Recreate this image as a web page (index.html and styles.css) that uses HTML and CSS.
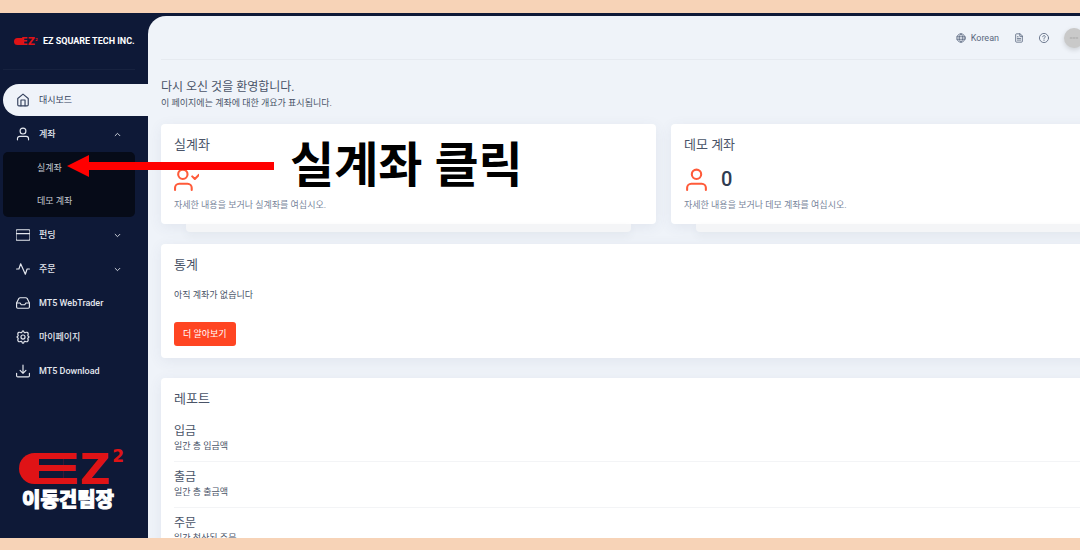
FILE: index.html
```
<!DOCTYPE html>
<html lang="ko">

<head>
    <meta charset="utf-8">
    <title>EZ Square Tech Inc.</title>
    <link rel="stylesheet" href="styles.css">
</head>

<body>
    <div class="app">
        <!-- Sidebar -->
        <aside class="sidebar">
            <div class="brand">
                <span class="mark mark-small"><b>EZ</b><sup>2</sup></span>
                <span class="brand-name">EZ SQUARE TECH INC.</span>
            </div>
            <nav class="menu">
                <a href="#" class="item active">
                    <svg class="icon" viewBox="0 0 24 24"><path d="M3 9.500 12 2l9 7.500V20a2 2 0 0 1-2 2H5a2 2 0 0 1-2-2z"/><path d="M8.500 22V12h7v10"/></svg>
                    대시보드
                </a>
                <button type="button" class="item">
                    <svg class="icon" viewBox="0 0 24 24"><circle cx="12" cy="7" r="5"/><path d="M2.500 22v-2a4 4 0 0 1 4-4h11a4 4 0 0 1 4 4v2"/></svg>
                    계좌
                    <svg class="chevron" viewBox="0 0 24 24"><path d="m4 16 8-8 8 8"/></svg>
                </button>
                <div class="submenu">
                    <a href="#">실계좌</a>
                    <a href="#">데모 계좌</a>
                </div>
                <button type="button" class="item">
                    <svg class="icon" viewBox="0 0 24 24"><rect x="0" y="3" width="24" height="18" rx="2"/><path d="M0 9.500h24"/></svg>
                    펀딩
                    <svg class="chevron" viewBox="0 0 24 24"><path d="m4 8 8 8 8-8"/></svg>
                </button>
                <button type="button" class="item">
                    <svg class="icon" viewBox="0 0 24 24"><path d="M23 12h-4l-3 9L8 3l-3 9H1"/></svg>
                    주문
                    <svg class="chevron" viewBox="0 0 24 24"><path d="m4 8 8 8 8-8"/></svg>
                </button>
                <a href="#" class="item">
                    <svg class="icon" viewBox="0 0 24 24"><path d="M23 12h-6l-2 3H9l-2-3H1"/><path d="M5 4 1 12v7a2 2 0 0 0 2 2h18a2 2 0 0 0 2-2v-7l-4-8q-1-1-2-1H7q-1 0-2 1z"/></svg>
                    MT5 WebTrader
                </a>
                <a href="#" class="item">
                    <svg class="icon" viewBox="0 0 24 24"><path d="M10.300 3.300c.4-2.400 3-2.400 3.400 0a1.700 1.700 0 0 0 2.600 1.100c1.700-1.300 4.700-.2 4.700 2.300 0 1-.8 1.900-.8 2.700 0 1.300 2 1.200 2 2.600s-2 1.300-2 2.600c0 .8.8 1.700.8 2.700 0 2.500-3 3.600-4.700 2.300a1.700 1.700 0 0 0-2.600 1.100c-.4 2.400-3 2.400-3.400 0a1.700 1.700 0 0 0-2.600-1.100C6 20.900 3 19.800 3 17.300c0-1 .8-1.900.8-2.700 0-1.300-2-1.200-2-2.600s2-1.300 2-2.600C3.800 8.600 3 7.700 3 6.700c0-2.500 3-3.600 4.700-2.300a1.700 1.700 0 0 0 2.600-1.100z"/><circle cx="12" cy="12" r="3.500"/></svg>
                    마이페이지
                </a>
                <a href="#" class="item">
                    <svg class="icon" viewBox="0 0 24 24"><path d="M1 16v4a2 2 0 0 0 2 2h18a2 2 0 0 0 2-2v-4M7 11l5 5 5-5M12 2v14"/></svg>
                    MT5 Download
                </a>
            </nav>
            <div class="team">
                <span class="mark"><b>EZ</b><sup>2</sup></span>
                <p>이동건팀장</p>
            </div>
        </aside>

        <!-- Main content -->
        <main class="main">
            <header class="topbar">
                <button type="button" class="language">
                    <svg viewBox="0 0 24 24"><circle cx="12" cy="12" r="10"/><path d="M2.500 9h19M2.500 15h19M12 2c-6 6-6 14 0 20M12 2c6 6 6 14 0 20"/></svg>
                    Korean
                </button>
                <button type="button" aria-label="문서">
                    <svg viewBox="0 0 24 24"><path d="M14 2H6a2 2 0 0 0-2 2v16a2 2 0 0 0 2 2h12a2 2 0 0 0 2-2V8zM14 2v6h6M8 9h2M8 13h8M8 17h8"/></svg>
                </button>
                <button type="button" aria-label="도움말">
                    <svg viewBox="0 0 24 24"><circle cx="12" cy="12" r="11"/><path d="M9 9c0-4 6-4 6 0 0 2-3 2-3 5M12 17v1"/></svg>
                </button>
                <button type="button" class="avatar" aria-label="프로필">
                    <svg viewBox="0 0 24 24"><path d="M3 12h4M10 12h4M17 12h4"/></svg>
                </button>
            </header>

            <div class="page">
                <section class="welcome">
                    <h1>다시 오신 것을 환영합니다.</h1>
                    <p>이 페이지에는 계좌에 대한 개요가 표시됩니다.</p>
                </section>

                <div class="accounts">
                    <section class="card stacked">
                        <h2>실계좌</h2>
                        <div class="count">
                            <svg viewBox="0 0 24 24"><circle cx="8.500" cy="7" r="4.500"/><path d="M1 22v-2a4 4 0 0 1 4-4h8a4 4 0 0 1 4 4v2M17.500 9l2.500 2.500L24 7.500"/></svg>
                        </div>
                        <p>자세한 내용을 보거나 실계좌를 여십시오.</p>
                    </section>
                    <section class="card stacked">
                        <h2>데모 계좌</h2>
                        <div class="count">
                            <svg viewBox="0 0 24 24"><circle cx="12" cy="7" r="4.500"/><path d="M3 22v-2a4 4 0 0 1 4-4h10a4 4 0 0 1 4 4v2"/></svg>
                            <span>0</span>
                        </div>
                        <p>자세한 내용을 보거나 데모 계좌를 여십시오.</p>
                    </section>
                </div>

                <section class="card stats">
                    <h2>통계</h2>
                    <p>아직 계좌가 없습니다</p>
                    <button type="button">더 알아보기</button>
                </section>

                <section class="card">
                    <h2>레포트</h2>
                    <ul class="report">
                        <li>
                            <h3>입금</h3>
                            <p>일간 총 입금액</p>
                        </li>
                        <li>
                            <h3>출금</h3>
                            <p>일간 총 출금액</p>
                        </li>
                        <li>
                            <h3>주문</h3>
                            <p>일간 청산된 주문</p>
                        </li>
                    </ul>
                </section>
            </div>
        </main>

        <!-- Callout pointing at the live account link -->
        <div class="callout">
            <svg viewBox="0 0 207 22"><path d="M0 11 22 0v7h185v8H22v7z"/></svg>
            <strong>실계좌 클릭</strong>
        </div>
    </div>
</body>

</html>
```
FILE: styles.css
```
* {
    box-sizing: border-box;
}

body {
    margin: 0;
    height: 100vh;
    padding: 13px 0 12px;
    overflow: hidden;
    background-color: #f7d3b7;
    font-family: Roboto, "Noto Sans CJK KR", sans-serif;
    font-size: 9px;
    line-height: 14px;
    color: #4a5468;
}

h1, h2, h3, p, ul {
    margin: 0;
    padding: 0;
    font-weight: 400;
}

button {
    padding: 0;
    border: 0;
    background: none;
    font: inherit;
    color: inherit;
}

a {
    color: inherit;
    text-decoration: none;
}

svg {
    display: block;
    fill: none;
    stroke: currentColor;
    stroke-width: 2;
    stroke-linecap: round;
    stroke-linejoin: round;
}

.app {
    position: relative;
    display: flex;
    height: 100%;
    overflow: hidden;
    background-color: #0e1937;
}

/* Sidebar */
.sidebar {
    display: flex;
    flex-direction: column;
    flex: 0 0 148px;
    padding-left: 3px;
}

.brand {
    display: flex;
    align-items: center;
    gap: 5px;
    height: 57px;
    margin-right: 13px;
    padding-left: 11px;
    border-bottom: 1px solid #17223f;
    white-space: nowrap;
}

.brand-name {
    color: #fff;
    font-weight: 700;
}

/* EZ mark: rounded, slotted spine running into the letters */
.mark {
    display: flex;
    align-items: center;
    height: 31px;
    color: #df1316;
    font-family: "DejaVu Sans", sans-serif;
    line-height: 31px;
}

.mark::before {
    content: "";
    z-index: 1;
    width: 44px;
    height: 31px;
    margin-right: -12px;
    border-radius: 16px 0 0 16px;
    background-color: #df1316;
    background-image: linear-gradient(#0e1937, #0e1937), linear-gradient(#0e1937, #0e1937);
    background-repeat: no-repeat;
    background-position: 20px 6px, 20px 18px;
    background-size: 24px 6px, 24px 7px;
}

.mark b {
    margin-top: 2px;
    font-size: 42px;
}

.mark sup {
    align-self: flex-start;
    margin-top: -12px;
    margin-left: 2px;
    font-size: 17px;
    font-weight: 700;
}

.mark-small {
    height: 7px;
    line-height: 7px;
}

.mark-small::before {
    width: 9px;
    height: 7px;
    margin-right: -2px;
    border-radius: 4px 0 0 4px;
    background-image: none;
}

.mark-small b {
    margin-top: 0;
    font-size: 10px;
}

.mark-small sup {
    margin-top: -2px;
    margin-left: 0;
    font-size: 4px;
}

.menu {
    display: flex;
    flex-direction: column;
    gap: 2px;
    margin-top: 14px;
    color: #e4e7ee;
    font-weight: 500;
}

.item {
    display: flex;
    align-items: center;
    gap: 9px;
    height: 32px;
    padding-left: 13px;
    text-align: left;
}

.active {
    border-radius: 16px 0 0 16px;
    background-color: #eff3f9;
    color: #36435f;
    font-weight: 400;
}

.icon {
    width: 14px;
    height: 14px;
}

.chevron {
    width: 7px;
    height: 7px;
    margin-left: auto;
    margin-right: 27px;
    stroke-width: 3;
}

.submenu {
    display: flex;
    flex-direction: column;
    height: 65px;
    margin-right: 13px;
    border-radius: 5px;
    background-color: #060b18;
    color: #c4c8d0;
    font-weight: 400;
}

.submenu a {
    flex: 1;
    display: flex;
    align-items: center;
    padding-left: 34px;
}

.team {
    margin: auto 0 24px 16px;
}

.team p {
    padding: 2px 0 0 3px;
    color: #fff;
    font-size: 20px;
    font-weight: 900;
    line-height: 28px;
    -webkit-text-stroke: 1px #fff;
}

/* Main area */
.main {
    flex: 1;
    min-width: 0;
    margin-top: 3px;
    padding-left: 13px;
    overflow: hidden;
    border-top-left-radius: 18px;
    background-color: #eff3f9;
}

.topbar {
    display: flex;
    align-items: center;
    justify-content: flex-end;
    gap: 15px;
    height: 44px;
    border-bottom: 1px solid #e6eaf0;
    color: #5a6880;
}

.topbar svg {
    width: 10px;
    height: 10px;
}

.language {
    display: flex;
    align-items: center;
    gap: 5px;
}

.avatar {
    display: grid;
    place-items: center;
    width: 20px;
    height: 20px;
    margin-right: -4px;
    border-radius: 50%;
    background-color: #c9c9c9;
    color: #a0a0a0;
    box-shadow: 0 2px 5px rgba(0, 0, 0, 0.15);
}

.page {
    min-width: 1005px;
    padding-top: 19px;
}

.welcome h1 {
    font-size: 12px;
    line-height: 17px;
}

.accounts {
    display: grid;
    grid-template-columns: 1fr 1fr;
    gap: 15px;
    margin-top: 14px;
}

.card {
    margin-bottom: 20px;
    padding: 11px 13px 12px;
    border-radius: 4px;
    background-color: #fff;
    box-shadow: 0 3px 14px rgba(60, 80, 110, 0.08);
}

.card h2 {
    font-size: 13px;
    line-height: 20px;
}

.stacked {
    position: relative;
    height: 100px;
}

/* Second sheet peeking out below the card */
.stacked::after {
    content: "";
    position: absolute;
    top: 100%;
    left: 25px;
    right: 25px;
    height: 8px;
    border-radius: 0 0 4px 4px;
    background-color: #f4f5f7;
    box-shadow: 0 4px 8px rgba(60, 80, 110, 0.06);
}

.stacked p {
    margin-top: 7px;
    color: #78859b;
}

.count {
    display: flex;
    align-items: center;
    gap: 12px;
    height: 24px;
    margin-top: 12px;
    color: #2f3c52;
    font-size: 20px;
    font-weight: 500;
}

.count svg {
    width: 25px;
    height: 25px;
    color: #ff5b3a;
}

.stats p {
    margin: 13px 0 20px;
}

.stats button {
    height: 24px;
    padding: 0 9px;
    border-radius: 3px;
    background-color: #ff4522;
    color: #fff;
}

.report {
    margin-top: 7px;
    list-style: none;
}

.report li {
    padding: 7px 0 8px;
    border-bottom: 1px solid #f3f4f6;
}

.report h3 {
    font-size: 12px;
    line-height: 16px;
}

/* Callout over the page */
.callout {
    position: absolute;
    top: 124px;
    left: 67px;
    display: flex;
    align-items: center;
    gap: 16px;
    height: 58px;
    color: #000;
    font-size: 48px;
    line-height: 58px;
}

.callout svg {
    width: 207px;
    height: 22px;
    fill: #f00;
    stroke: none;
}
```
